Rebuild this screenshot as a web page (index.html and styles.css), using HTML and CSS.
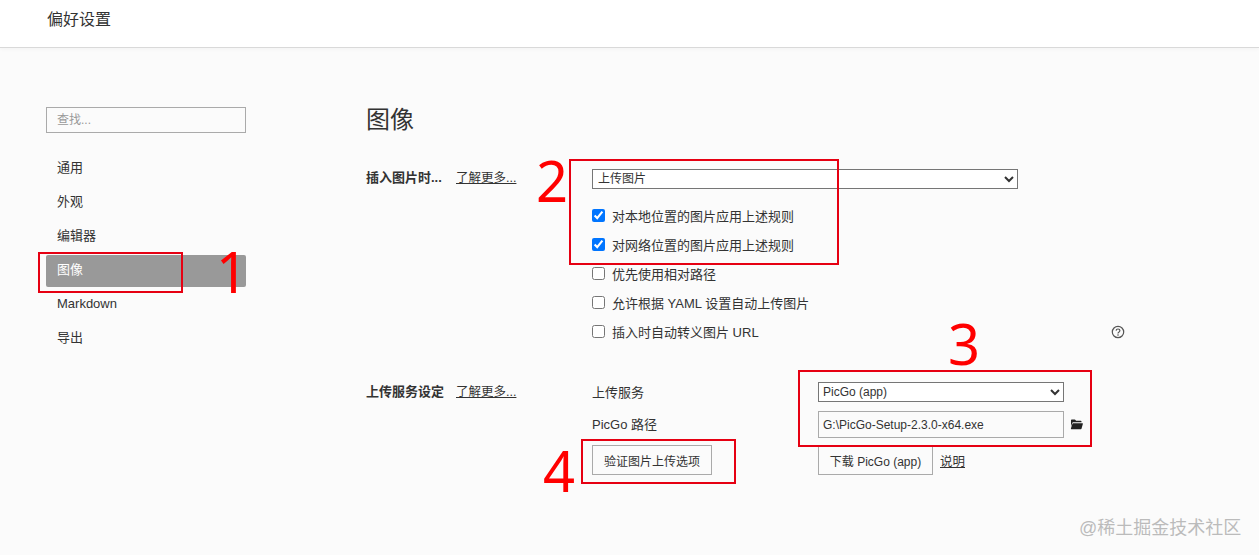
FILE: index.html
```html
<!DOCTYPE html>
<html lang="zh-CN">
<head>
    <meta charset="UTF-8">
    <title>偏好设置</title>
    <link rel="stylesheet" href="styles.css">
</head>
<body>
<header class="topbar">偏好设置</header>
<div class="layout">
    <aside class="sidebar">
        <input class="search" type="text" placeholder="查找...">
        <nav class="nav">
            <a class="nav-item">通用</a>
            <a class="nav-item">外观</a>
            <a class="nav-item">编辑器</a>
            <a class="nav-item active">图像</a>
            <a class="nav-item">Markdown</a>
            <a class="nav-item">导出</a>
        </nav>
    </aside>
    <main class="content">
        <h1 class="title">图像</h1>
        <section class="setting insert">
            <div class="setting-head">
                <span class="setting-name">插入图片时...</span>
                <a class="link">了解更多...</a>
            </div>
            <div class="setting-body">
                <select class="select select-wide">
                    <option>上传图片</option>
                </select>
                <div class="checks">
                    <label class="check"><input type="checkbox" checked>对本地位置的图片应用上述规则</label>
                    <label class="check"><input type="checkbox" checked>对网络位置的图片应用上述规则</label>
                    <label class="check"><input type="checkbox">优先使用相对路径</label>
                    <label class="check"><input type="checkbox">允许根据 YAML 设置自动上传图片</label>
                    <label class="check check-help"><span class="check-text"><input type="checkbox">插入时自动转义图片 URL</span>
                        <svg class="help" width="14" height="14" viewBox="0 0 14 14">
                            <circle cx="7" cy="7" r="5.7" fill="none" stroke="#555" stroke-width="1.2"/>
                            <path d="M5.1 5.6C5.2 4.5 6 4 7 4c1.100 0 1.900.7 1.900 1.600 0 .8-.5 1.200-1.100 1.600-.5.3-.8.6-.8 1.200" fill="none" stroke="#555" stroke-width="1.200"/>
                            <circle cx="7" cy="10" r=".8" fill="#555"/>
                        </svg>
                    </label>
                </div>
            </div>
        </section>
        <section class="setting upload">
            <div class="setting-head">
                <span class="setting-name">上传服务设定</span>
                <a class="link">了解更多...</a>
            </div>
            <div class="upload-grid">
                <span class="field-name">上传服务</span>
                <select class="select select-service">
                    <option>PicGo (app)</option>
                </select>
                <span class="field-name field-path">PicGo 路径</span>
                <div class="path-row">
                    <input class="path" type="text" value="G:\PicGo-Setup-2.3.0-x64.exe">
                    <svg class="folder" width="13" height="11" viewBox="0 0 13 11">
                        <path d="M1 1.200C1 .8 1.300.5 1.700.5h3c.4 0 .6.200.8.500l.5.800h4.700c.5 0 .8.300.8.800v.6H3.200c-.5 0-.9.300-1 .7L1 7.500z" fill="#222"/>
                        <path d="M3 4.200h9.500c.3 0 .500.300.4.600l-1.400 4.900c-.1.300-.3.500-.6.500H1.300c-.3 0-.5-.3-.4-.6l1.500-4.900c.1-.3.300-.5.600-.5z" fill="#222"/>
                    </svg>
                </div>
                <div><button class="btn btn-verify" type="button">验证图片上传选项</button></div>
                <div class="download-row">
                    <button class="btn btn-download" type="button">下载 PicGo (app)</button>
                    <a class="link">说明</a>
                </div>
            </div>
        </section>
    </main>
</div>

<div class="mark mark-1"></div>
<div class="mark mark-2"></div>
<div class="mark mark-3"></div>
<div class="mark mark-4"></div>
<span class="digit digit-1">1</span>
<span class="digit digit-2">2</span>
<span class="digit digit-3">3</span>
<span class="digit digit-4">4</span>
<span class="watermark">@稀土掘金技术社区</span>
</body>
</html>
```

FILE: styles.css
```css
* {
    padding: 0;
    margin: 0;
    box-sizing: border-box;
}

html, body {
    height: 555px;
    overflow: hidden;
}

body {
    position: relative;
    background: #fbfbfb;
    color: #333;
    font-family: "Liberation Sans", "Noto Sans CJK SC", sans-serif;
    font-size: 13px;
}

.topbar {
    height: 48px;
    padding: 11px 0 0 47px;
    background: #fff;
    border-bottom: 1px solid #d9d9d9;
    box-shadow: 0 1px 4px rgba(0, 0, 0, 0.04);
    font-size: 16px;
    line-height: 18px;
}

.layout {
    display: flex;
    padding-left: 46px;
}

.sidebar {
    width: 200px;
    padding-top: 59px;
}

.search {
    display: block;
    width: 200px;
    height: 26px;
    padding-left: 10px;
    background: #fbfbfb;
    border: 1px solid #aaa;
    font: 12px "Liberation Sans", "Noto Sans CJK SC", sans-serif;
}

.search::placeholder {
    color: #999;
}

.nav {
    display: flex;
    flex-direction: column;
    gap: 2px;
    margin-top: 20px;
}

.nav-item {
    height: 32px;
    padding-left: 11px;
    border-radius: 2px;
    line-height: 30px;
}

.nav-item.active {
    background: #999;
    color: #fff;
}

.content {
    margin-left: 120px;
    flex-grow: 1;
}

.title {
    height: 36px;
    margin-top: 54px;
    font-size: 24px;
    font-weight: normal;
    line-height: 36px;
}

.setting {
    display: flex;
}

.setting-head {
    width: 226px;
    flex-shrink: 0;
    display: flex;
    line-height: 16px;
}

.setting-name {
    width: 90px;
    font-weight: bold;
}

.link {
    color: #333;
    font-size: 12.5px;
    text-decoration: underline;
}

.insert {
    margin-top: 31px;
}

.insert .setting-head {
    padding-top: 1px;
}

.select {
    display: block;
    height: 20px;
    padding-left: 1px;
    background: #fff;
    border: 1px solid #767676;
    color: #333;
    font: 12px "Liberation Sans", "Noto Sans CJK SC", sans-serif;
}

.select-wide {
    width: 426px;
}

.checks {
    margin-top: 12px;
}

.check {
    display: flex;
    align-items: center;
    height: 29px;
}

.check input {
    width: 13px;
    height: 13px;
    margin-right: 7px;
    accent-color: #0075ff;
}

.check-help {
    width: 533px;
    justify-content: space-between;
}

.check-text {
    display: flex;
    align-items: center;
}

.upload {
    margin-top: 36px;
}

.upload .setting-head {
    padding-top: 2px;
}

.upload-grid {
    display: grid;
    grid-template-columns: 226px 275px;
    grid-template-rows: 22px 27px 30px;
    row-gap: 7px;
    align-items: start;
}

.field-name {
    line-height: 22px;
}

.field-path {
    line-height: 27px;
}

.select-service {
    width: 246px;
    padding-left: 0;
}

.path-row {
    display: flex;
    align-items: center;
    height: 27px;
}

.path {
    width: 246px;
    height: 27px;
    padding-left: 4px;
    background: #fbfbfb;
    border: 1px solid #aaa;
    color: #333;
    font: 12px "Liberation Sans", "Noto Sans CJK SC", sans-serif;
}

.folder {
    margin-left: 6px;
}

.btn {
    height: 30px;
    background: #fbfbfb;
    border: 1px solid #aaa;
    color: #333;
    font: 12px "Liberation Sans", "Noto Sans CJK SC", sans-serif;
}

.btn-verify {
    display: block;
    width: 120px;
}

.btn-download {
    width: 115px;
}

.download-row {
    display: flex;
    align-items: center;
    gap: 7px;
}

.mark {
    position: absolute;
    border: 2px solid #e60012;
}

.mark-1 {
    left: 38px;
    top: 252px;
    width: 145px;
    height: 41px;
}

.mark-2 {
    left: 569px;
    top: 159px;
    width: 270px;
    height: 106px;
}

.mark-3 {
    left: 798px;
    top: 370px;
    width: 294px;
    height: 77px;
}

.mark-4 {
    left: 581px;
    top: 439px;
    width: 155px;
    height: 45px;
}

.digit {
    position: absolute;
    color: #f00;
    font-family: "Noto Sans", sans-serif;
    font-size: 56px;
    line-height: 56px;
}

.digit-1 {
    left: 216px;
    top: 243px;
}

.digit-2 {
    left: 536px;
    top: 152px;
}

.digit-3 {
    left: 948px;
    top: 315px;
}

.digit-4 {
    left: 543px;
    top: 442px;
}

.watermark {
    position: absolute;
    left: 1079px;
    top: 517px;
    color: #bbb;
    font-size: 18px;
    line-height: 22px;
}
```
